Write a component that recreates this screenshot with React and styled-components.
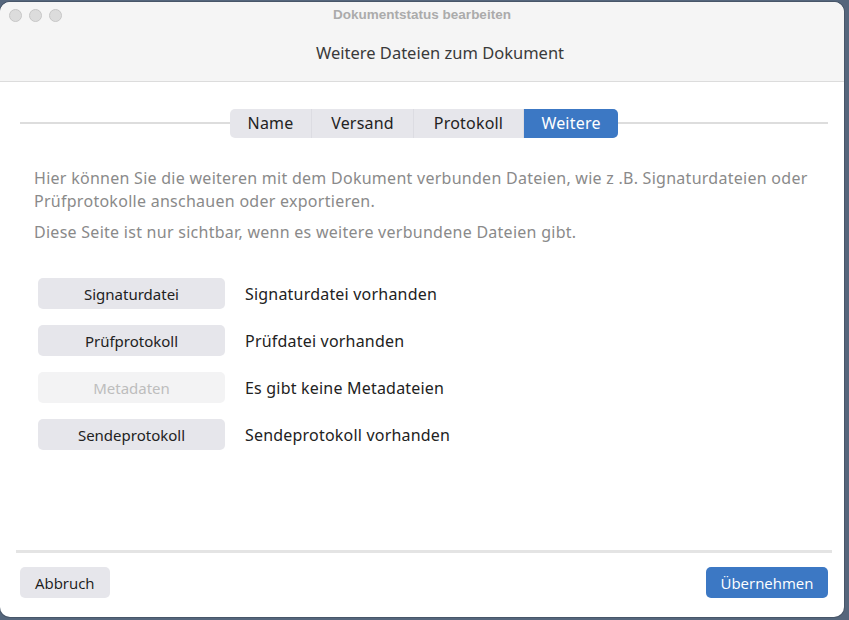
import styled, { createGlobalStyle } from 'styled-components';

const GlobalStyle = createGlobalStyle`
  html, body {
    margin: 0;
    padding: 0;
    height: 100%;
    background: #55667c;
  }
  body {
    font-family: 'Noto Sans', 'Open Sans', sans-serif;
  }
`;

const tabs = [
  { name: 'Name', width: 81 },
  { name: 'Versand', width: 102 },
  { name: 'Protokoll', width: 110 },
  { name: 'Weitere', width: 95 },
];

const files = [
  { button: 'Signaturdatei', label: 'Signaturdatei vorhanden' },
  { button: 'Prüfprotokoll', label: 'Prüfdatei vorhanden' },
  { button: 'Metadaten', label: 'Es gibt keine Metadateien', disabled: true },
  { button: 'Sendeprotokoll', label: 'Sendeprotokoll vorhanden' },
];

export default function App() {
  return (
    <>
      <GlobalStyle />
      <Desktop>
        <Window>
          <TitleBar>
            <Lights>
              <Light />
              <Light />
              <Light />
            </Lights>
            <WindowTitle>Dokumentstatus bearbeiten</WindowTitle>
            <Subtitle>Weitere Dateien zum Dokument</Subtitle>
          </TitleBar>

          <Content>
            <TabRow>
              <Segments>
                {tabs.map((t) => (
                  <Segment key={t.name} $width={t.width} $active={t.name === 'Weitere'}>
                    {t.name}
                  </Segment>
                ))}
              </Segments>
            </TabRow>

            <Description>
              <p>
                Hier können Sie die weiteren mit dem Dokument verbunden Dateien, wie z .B. Signaturdateien oder
                Prüfprotokolle anschauen oder exportieren.
              </p>
              <p>Diese Seite ist nur sichtbar, wenn es weitere verbundene Dateien gibt.</p>
            </Description>

            <FileList>
              {files.map((f) => (
                <FileRow key={f.button}>
                  <FileButton disabled={f.disabled}>{f.button}</FileButton>
                  <FileLabel>{f.label}</FileLabel>
                </FileRow>
              ))}
            </FileList>
          </Content>

          <Footer>
            <FooterButton>Abbruch</FooterButton>
            <FooterButton $primary>Übernehmen</FooterButton>
          </Footer>
        </Window>
      </Desktop>
    </>
  );
}

const Desktop = styled.div`
  width: 849px;
  height: 620px;
  padding-top: 2px;
  box-sizing: border-box;
`;

const Window = styled.div`
  width: 844px;
  height: 615px;
  background: #ffffff;
  border-radius: 10px;
  overflow: hidden;
  display: flex;
  flex-direction: column;
  box-shadow: 0 0 0 1px rgba(0, 0, 0, 0.15);
`;

const TitleBar = styled.div`
  position: relative;
  height: 79px;
  flex-shrink: 0;
  background: #f5f5f5;
  border-bottom: 1px solid #dcdcdc;
  display: flex;
  flex-direction: column;
  align-items: center;
`;

const Lights = styled.div`
  position: absolute;
  left: 9px;
  top: 7px;
  display: flex;
  gap: 7px;
`;

const Light = styled.span`
  width: 11px;
  height: 11px;
  border-radius: 50%;
  background: #dcdcdc;
  border: 1px solid #c6c6c6;
`;

const WindowTitle = styled.div`
  margin-top: 4px;
  font-family: 'Liberation Sans', Arial, sans-serif;
  font-size: 13.5px;
  font-weight: 700;
  color: #ababab;
  line-height: 18px;
`;

const Subtitle = styled.div`
  margin-top: 18px;
  padding-left: 36px;
  font-size: 16.5px;
  color: #3a3a3a;
  line-height: 22px;
`;

const Content = styled.div`
  flex: 1;
  display: flex;
  flex-direction: column;
  padding: 26px 16px 0 20px;
`;

const TabRow = styled.div`
  display: flex;
  justify-content: center;
  align-items: center;
  height: 30px;
  background: linear-gradient(#dddddd, #dddddd) center / 100% 2px no-repeat;
`;

const Segments = styled.div`
  display: flex;
  background: #e6e6eb;
  border-radius: 5px;
  overflow: hidden;
`;

const Segment = styled.div`
  width: ${(p) => p.$width}px;
  box-sizing: border-box;
  height: 29px;
  line-height: 29px;
  text-align: center;
  font-size: 16px;
  letter-spacing: 0.2px;
  color: ${(p) => (p.$active ? '#ffffff' : '#222222')};
  background: ${(p) => (p.$active ? '#3c78c4' : 'transparent')};
  & + & {
    border-left: 1px solid #dcdce2;
  }
`;

const Description = styled.div`
  margin-top: 29px;
  padding-left: 14px;
  font-size: 16px;
  letter-spacing: 0.27px;
  line-height: 23px;
  color: #8a8a8a;

  p {
    margin: 0 0 8px 0;
  }
`;

const FileList = styled.div`
  margin-top: 26px;
  padding-left: 18px;
  display: flex;
  flex-direction: column;
  gap: 16px;
`;

const FileRow = styled.div`
  display: flex;
  align-items: center;
  gap: 20px;
`;

const FileButton = styled.button`
  width: 187px;
  height: 31px;
  border: none;
  border-radius: 5px;
  font-family: inherit;
  font-size: 15px;
  color: ${(p) => (p.disabled ? '#bdbdbd' : '#222222')};
  background: ${(p) => (p.disabled ? '#f3f3f4' : '#e6e6eb')};
  cursor: ${(p) => (p.disabled ? 'default' : 'pointer')};
`;

const FileLabel = styled.span`
  font-size: 16px;
  letter-spacing: 0.2px;
  color: #222222;
`;

const Footer = styled.div`
  flex-shrink: 0;
  margin: 0 12px 0 16px;
  border-top: 3px solid #e4e4e4;
  padding: 14px 4px 19px 4px;
  display: flex;
  justify-content: space-between;
  align-items: center;
`;

const FooterButton = styled.button`
  height: 31px;
  padding: 0 ${(p) => (p.$primary ? '14.5px' : '15px')};
  border: none;
  border-radius: 5px;
  font-family: 'Open Sans', sans-serif;
  font-size: 15px;
  color: ${(p) => (p.$primary ? '#ffffff' : '#1a1a1a')};
  background: ${(p) => (p.$primary ? '#3c78c4' : '#e6e6eb')};
  cursor: pointer;
`;
